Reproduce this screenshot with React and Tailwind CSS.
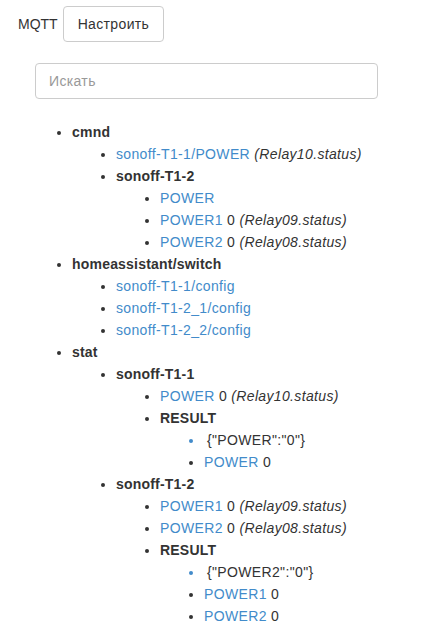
import React from "react";

const tree = [
  {
    label: "cmnd",
    children: [
      { link: "sonoff-T1-1/POWER", note: "(Relay10.status)" },
      {
        label: "sonoff-T1-2",
        children: [
          { link: "POWER" },
          { link: "POWER1", value: "0", note: "(Relay09.status)" },
          { link: "POWER2", value: "0", note: "(Relay08.status)" },
        ],
      },
    ],
  },
  {
    label: "homeassistant/switch",
    children: [
      { link: "sonoff-T1-1/config" },
      { link: "sonoff-T1-2_1/config" },
      { link: "sonoff-T1-2_2/config" },
    ],
  },
  {
    label: "stat",
    children: [
      {
        label: "sonoff-T1-1",
        children: [
          { link: "POWER", value: "0", note: "(Relay10.status)" },
          {
            label: "RESULT",
            children: [{ json: '{"POWER":"0"}' }, { link: "POWER", value: "0" }],
          },
        ],
      },
      {
        label: "sonoff-T1-2",
        children: [
          { link: "POWER1", value: "0", note: "(Relay09.status)" },
          { link: "POWER2", value: "0", note: "(Relay08.status)" },
          {
            label: "RESULT",
            children: [
              { json: '{"POWER2":"0"}' },
              { link: "POWER1", value: "0" },
              { link: "POWER2", value: "0" },
            ],
          },
        ],
      },
    ],
  },
];

function Node({ node }) {
  if (node.json) {
    return (
      <li className="marker:text-[#428bca]">
        <span className="ml-[3px]">{node.json}</span>
      </li>
    );
  }
  if (node.label) {
    return (
      <li>
        <b className="font-bold tracking-[0.2px]">{node.label}</b>
        <ul className="list-disc pl-[44px]">
          {node.children.map((c, i) => (
            <Node key={i} node={c} />
          ))}
        </ul>
      </li>
    );
  }
  return (
    <li>
      <a href="#" className="text-[#428bca]">
        {node.link}
      </a>
      {node.value && " " + node.value}
      {node.note && (
        <>
          {" "}
          <i>{node.note}</i>
        </>
      )}
    </li>
  );
}

export default function App() {
  return (
    <div className="min-h-screen bg-white text-[14px] leading-[22px] tracking-[0.35px] text-[#333] font-['Liberation_Sans']">
      <div className="flex items-center gap-[5px] pl-[18px] pt-[6px]">
        <span className="tracking-normal">MQTT</span>
        <button className="h-[36px] px-[14px] border border-[#ccc] rounded-[4px] bg-white text-[#333]">
          Настроить
        </button>
      </div>

      <div className="pl-[35px] pt-[21px]">
        <input
          type="text"
          placeholder="Искать"
          className="w-[343px] h-[36px] px-[13px] border border-[#ccc] rounded-[4px] placeholder:text-[#999] outline-none"
        />
      </div>

      <ul className="list-disc pl-[72px] pt-[22px] pb-[20px]">
        {tree.map((n, i) => (
          <Node key={i} node={n} />
        ))}
      </ul>
    </div>
  );
}
